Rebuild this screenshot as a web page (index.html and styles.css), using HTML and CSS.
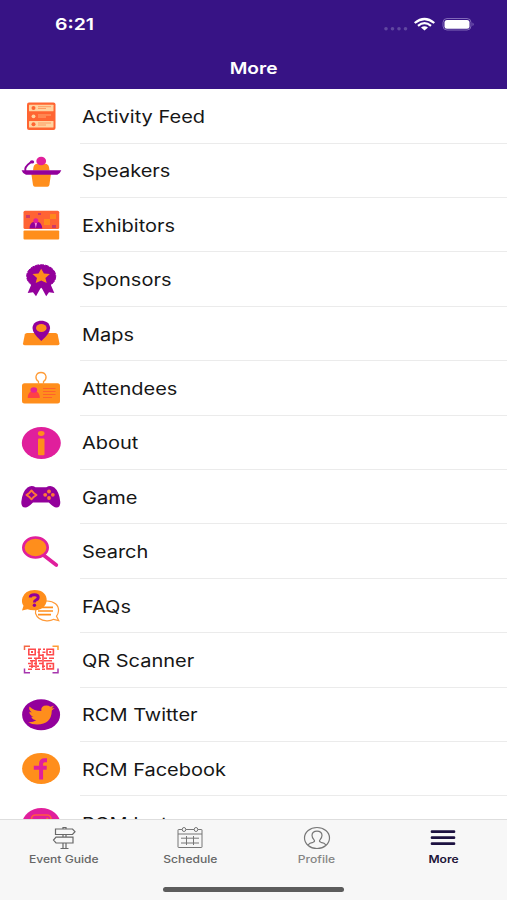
FILE: index.html
```html
<!DOCTYPE html>
<html lang="en">
<head>
<meta charset="utf-8">
<title>More</title>
<link rel="stylesheet" href="styles.css">
</head>
<body>
<div class="screen">
  <header class="header">
    <div class="status">
      <span class="time">6:21</span>
      <svg class="indicators" width="92" height="16" viewBox="0 0 92 16">
        <g fill="#6047a0"><circle cx="3" cy="12.800" r="1.800"/><circle cx="9.500" cy="12.800" r="1.800"/><circle cx="16" cy="12.800" r="1.800"/><circle cx="22.500" cy="12.800" r="1.800"/></g>
        <g fill="none" stroke="#fff" stroke-width="2.200"><path d="M31.700 7Q41.500-1 51.300 7"/><path d="M35 9.900Q41.500 4.500 48 9.900"/></g>
        <path d="M38 11.600Q41.500 9 45 11.600L41.500 14.500Z" fill="#fff"/>
        <rect x="60" y="2.500" width="28" height="11.500" rx="4" fill="none" stroke="#8068b8"/>
        <rect x="61.500" y="4" width="25" height="8.700" rx="2.500" fill="#fff"/>
        <path d="M89.500 6.500q2.500 1.800 0 3.600z" fill="#8068b8"/>
      </svg>
    </div>
    <h1 class="title"><span>More</span></h1>
  </header>
  <main class="list">
    <div class="row">
      <svg class="icon" viewBox="0 0 44 44"><rect x="8" y="8.500" width="28.500" height="27.500" rx="2" fill="#ff6532"/><g fill="#ffd3a0"><rect x="10" y="10.700" width="24.500" height="6.600" rx=".5"/><rect x="10" y="27" width="24.500" height="6.600" rx=".5"/></g><g fill="#ff6532"><circle cx="14.500" cy="14" r="2"/><circle cx="14.500" cy="30.300" r="2"/></g><circle cx="14.500" cy="22.300" r="1.900" fill="#ffd3a0"/><g stroke-width="1" fill="none"><path d="M19 14.500h8M19 12.700h13M19 31h8M19 29h13" stroke="#ff9c62"/><path d="M19 23h8M19 21h13" stroke="#ffaa70"/></g></svg>
      <span class="label">Activity Feed</span>
    </div>
    <div class="row">
      <svg class="icon" viewBox="0 0 44 44"><path d="M12.300 24.500h19.700l-1.600 11.500q-.3 1.800-2 1.800H16q-1.700 0-2-1.800ZM14 21.500q0-7 5-7h6.500q5 0 5 7Z" fill="#ff8e1c"/><ellipse cx="22.200" cy="12" rx="4.900" ry="4.300" fill="#e01f9c"/><path d="M2.600 21.300h39.700q-1 3-4 4.500H7Q3.500 24.500 2.600 21.300Z" fill="#93009b"/><path d="M6.500 22q-1.500-4 5-8.500" fill="none" stroke="#93009b" stroke-width="1.900"/><ellipse cx="13" cy="12.900" rx="2.200" ry="1.700" fill="#93009b"/></svg>
      <span class="label">Speakers</span>
    </div>
    <div class="row">
      <svg class="icon" viewBox="0 0 44 44"><rect x="4.500" y="7.700" width="35.700" height="18.300" rx="1.500" fill="#ff6334"/><rect x="4.500" y="27.600" width="35.700" height="8.800" rx="1" fill="#ff8e1c"/><path d="M31 11h6v5h-6zM25 16h6v6h-6z" fill="#ff881d"/><path d="M7 12h4v3H7zM19 10h3v2h-3zM33 22h4v3h-4z" fill="#cf3a66"/><path d="M10.500 25.500q.3-6 4.200-6.500h4.600q3.500 1 4 6.500Z" fill="#93009b"/><circle cx="16.800" cy="17.700" r="2.500" fill="#e01f9c"/><path d="m15.700 20 1.100 5.300L18 20z" fill="#fa8adb"/></svg>
      <span class="label">Exhibitors</span>
    </div>
    <div class="row">
      <svg class="icon" viewBox="0 0 44 44"><path d="M13 25 8.700 35l5.300-.8 3 4L22.200 29l5 9.200 2.800-4 5.300.8L31 25Z" fill="#93009b"/><ellipse cx="22.200" cy="18.200" rx="14.500" ry="11.500" fill="#93009b" stroke="#93009b" stroke-width="1" stroke-dasharray="4 1"/><path d="m22.200 10.800 2.700 4.800 6 .5-4.500 3.800 1.300 5.200-5.500-2.600-5.500 2.600 1.300-5.200-4.500-3.800 6-.5z" fill="#ff8e1c"/></svg>
      <span class="label">Sponsors</span>
    </div>
    <div class="row">
      <svg class="icon" viewBox="0 0 44 44"><path d="M8 21h28.500q1.800 0 2.200 1.500l1.800 9q.2 1.700-1.800 1.700H5.700q-2 0-1.700-1.700l1.800-9Q6.200 21 8 21Z" fill="#ff8e1c"/><path d="M22.300 29Q13.500 21.500 13.500 16c0-9.800 17.600-9.800 17.600 0q0 5.500-8.800 13Z" fill="#93009b"/><ellipse cx="22.300" cy="16" rx="5.300" ry="4" fill="#ff8e1c"/></svg>
      <span class="label">Maps</span>
    </div>
    <div class="row">
      <svg class="icon" viewBox="0 0 44 44"><rect x="3" y="17.300" width="38" height="20.300" rx="2.500" fill="#ff8e1c"/><path d="M19.500 18.500v-3q-3-2-2.500-5.200Q18 6.500 22 6.500t5 3.800q.5 3.200-2.500 5.200v3" fill="none" stroke="#ff9c38" stroke-width="1.300"/><path d="M8.700 32q0-5 3.300-6.500h5.600Q20.800 27 20.800 32Z" fill="#ff4144"/><ellipse cx="14.800" cy="24" rx="3.400" ry="2.700" fill="#e52392"/><path d="M24 22.500h12.500M24 25.500h12.500M24 28.500h12.500M24 31.500h9" stroke="#ff622b" stroke-width="1"/></svg>
      <span class="label">Attendees</span>
    </div>
    <div class="row">
      <svg class="icon" viewBox="0 0 44 44"><ellipse cx="22.300" cy="22" rx="19.500" ry="16" fill="#e01f9c"/><ellipse cx="22.200" cy="12.500" rx="3.300" ry="2.400" fill="#ff8e1c"/><rect x="19" y="17.500" width="6.500" height="16.700" rx="1" fill="#ff8e1c"/></svg>
      <span class="label">About</span>
    </div>
    <div class="row">
      <svg class="icon" viewBox="0 0 44 44"><path d="M8.500 12.500q4-3 8-.2h10.800q4-2.800 8 .2 5 4 6 14.500.2 5.500-4 5.500-2.500 0-7.500-5H14q-5 5-7.500 5-4.500 0-4.200-5.500 1-10.500 6.200-14.500Z" fill="#93009b"/><path d="m12.500 15.500 2.200 2.400 2.800 2-2.800 2-2.200 2.400-2.200-2.400-2.800-2 2.800-2z" fill="none" stroke="#ff7737" stroke-width="1.900" stroke-linejoin="round"/><g fill="#ff7737"><circle cx="30" cy="16.500" r="1.900"/><circle cx="30" cy="23" r="1.900"/><circle cx="26.200" cy="19.800" r="1.900"/><circle cx="33.800" cy="19.800" r="1.900"/></g></svg>
      <span class="label">Game</span>
    </div>
    <div class="row">
      <svg class="icon" viewBox="0 0 44 44"><path d="m25 25.500 12.300 9.500" stroke="#e01f9c" stroke-width="3.700" stroke-linecap="round"/><ellipse cx="16.500" cy="17.500" rx="12.200" ry="10" fill="#ff8e1c" stroke="#e01f9c" stroke-width="2.600"/></svg>
      <span class="label">Search</span>
    </div>
    <div class="row">
      <svg class="icon" viewBox="0 0 44 44"><path d="M28 17c7 0 12 4 11.500 10q-.3 3-2 5.200l2.200 4.300-5-1.200q-3 1.700-7 1.500-9-.5-11.200-7.500Q16.500 17 28 17Z" fill="#fff" stroke="#ff9a38" stroke-width="1.200"/><path d="M21 23.300h13M19 27h15M19 30.700h13" stroke="#ff8e1c" stroke-width="1.700"/><path d="M15.500 6C24 6 28 11 27.700 16.500 27 23 21.500 26.300 15 26.300q-4 0-6.500-1L3 26.500l1.500-4.700Q2 18.500 3.500 13.500 6 6.200 15.500 6Z" fill="#ff8e1c"/><path d="M11.200 13.500q.2-2.700 4.200-2.700 3.800 0 3.800 2.400 0 1.800-2.200 2.800-1.600.7-1.600 2.500" fill="none" stroke="#93009b" stroke-width="3"/><circle cx="15.400" cy="21.300" r="1.700" fill="#93009b"/></svg>
      <span class="label">FAQs</span>
    </div>
    <div class="row">
      <svg class="icon" viewBox="0 0 44 44"><path d="M5.500 12V8.200H11" fill="none" stroke="#f36845" stroke-width="1.500"/><path d="M33.500 8.200H39V12" fill="none" stroke="#ff9a32" stroke-width="1.500"/><path d="M5.500 30.500v4.300H11M33.500 34.800H39v-4.300" fill="none" stroke="#a636ae" stroke-width="1.500"/><g fill="none" stroke="#ff4a4c" stroke-width="1.600"><path d="M9.800 11.300h6.400v5.400H9.800zM28 11.300h6.400v5.400H28zM28 25.500h6.400v5.400H28z"/><path d="M19 11.200h3m2 0h2M18.500 14.200h2m3 0h3M20 17.200h4M9 20.200h4m2 0h7m3 0h3m2 0h5M11 22.800h5m3 0h4m2 0h8M9 25.500h3m3 0h3m2 0h4M10 28.300h6m2 0h2m3 0h3M9 31.200h4m3 0h5m2 0h3"/><path d="M20 12v8M24 16v14M17 20v10M13 22v8"/></g><path d="M12 13h2v2h-2zM30.200 13h2v2h-2zM30.200 27.200h2v2h-2z" fill="#ff4a4c"/></svg>
      <span class="label">QR Scanner</span>
    </div>
    <div class="row">
      <svg class="icon" viewBox="0 0 44 44"><ellipse cx="22.100" cy="21.700" rx="19" ry="15.500" fill="#93009b"/><path d="M10.500 13.500Q15 18 22.300 18q-.7-5.500 5.200-5.500 2.300 0 3.800 1.300l3.600-1-2.300 2.600 3-.5-2.800 2.700Q32.500 31.500 18 31.500q-5.200 0-8.800-2.200 5 .2 8-2-3.800-.5-5-3.500h2.300q-4-1.500-4.200-5l2.500.6q-3.700-2.700-2.300-5.900Z" fill="#ff8e1c"/></svg>
      <span class="label">RCM Twitter</span>
    </div>
    <div class="row">
      <svg class="icon" viewBox="0 0 44 44"><ellipse cx="22.100" cy="21.400" rx="19" ry="15.500" fill="#ff8e1c"/><path d="M28 13.200h-2.200q-3.700 0-3.700 3.500v15.800M14.800 20.700h12.900" fill="none" stroke="#e01f9c" stroke-width="4"/></svg>
      <span class="label">RCM Facebook</span>
    </div>
    <div class="row">
      <svg class="icon" viewBox="0 0 44 44"><ellipse cx="22.300" cy="21.600" rx="19" ry="15.500" fill="#e01f9c"/><rect x="12.500" y="13" width="19.500" height="17" rx="4" fill="none" stroke="#ff5b42" stroke-width="1.700"/><ellipse cx="22.200" cy="21.500" rx="4.500" ry="4" fill="none" stroke="#ff5b42" stroke-width="1.700"/><circle cx="28.300" cy="16.500" r="1.100" fill="#ff5b42"/></svg>
      <span class="label">RCM Instagram</span>
    </div>
  </main>
  <nav class="tabs">
    <div class="tab">
      <svg viewBox="0 0 30 26"><g fill="none" stroke="#686868" stroke-width="1.200"><path d="M14 4V2.500h3V4M14 9.500v2.700m3-2.700v2.700M14 18v5m3-5v5M11.500 23.500h8M6.500 4h17l2.500 2.700-2.500 2.800h-17zM24 12.200H7l-2.500 2.900L7 18h17z"/></g></svg>
      <span>Event Guide</span>
    </div>
    <div class="tab">
      <svg viewBox="0 0 30 26"><g fill="none" stroke="#777" stroke-width="1"><rect x="3" y="4.500" width="24" height="18" rx=".5"/><path d="M3 9h24M6 13.200h18M6 18h18M11.500 11v9M18.500 11v9"/><ellipse cx="9" cy="4.500" rx="1.800" ry="2" fill="#f7f7f7"/><ellipse cx="21" cy="4.500" rx="1.800" ry="2" fill="#f7f7f7"/></g></svg>
      <span>Schedule</span>
    </div>
    <div class="tab profile">
      <svg viewBox="0 0 30 26"><g fill="none" stroke="#777" stroke-width="1.200"><ellipse cx="15" cy="13" rx="12.500" ry="10.500"/><path d="M6 20q1.500-2.200 5-2.700 2.500-.8 1-2.500-2-2-2-4.500Q10.300 6.200 15 6.200t5 4.100q0 2.500-2 4.500-1.500 1.700 1 2.500 3.500.5 5 2.700"/></g></svg>
      <span>Profile</span>
    </div>
    <div class="tab active">
      <svg viewBox="0 0 30 26"><path d="M4 6.700h22M4 12.700h22M4 18.700h22" stroke="#1c1140" stroke-width="2.700" stroke-linecap="round"/></svg>
      <span>More</span>
    </div>
    <div class="home"></div>
  </nav>
</div>
</body>
</html>
```
FILE: styles.css
```css
* { box-sizing: border-box; }
body { margin: 0; background: #fff; font-family: Inter, "Liberation Sans", sans-serif; }
.screen { width: 507px; height: 900px; overflow: hidden; display: flex; flex-direction: column; }
.header { height: 89.300px; flex: none; background: #371385; color: #fff; }
.status { height: 48px; display: flex; justify-content: space-between; align-items: center; padding: 0 32px 0 55px; }
.time { font-size: 16.500px; font-weight: 600; transform: scaleX(1.18); transform-origin: left; }
.title { margin: 0; height: 40px; line-height: 41px; text-align: center; font-size: 16.500px; font-weight: 600; }
.title span { display: inline-block; transform: scaleX(1.160); }
.list { flex: 1; min-height: 0; overflow: hidden; }
.row { height: 54.400px; display: flex; align-items: center; padding-left: 18.500px; background: linear-gradient(#ebebeb, #ebebeb) 80px 100% / 100% 1px no-repeat; }
.icon { width: 44px; height: 44px; flex: none; }
.label { margin-left: 19.500px; font-size: 17.300px; color: #161616; white-space: nowrap; transform: scaleX(1.157); transform-origin: left; }
.tabs { height: 81px; flex: none; background: #f7f7f7; border-top: 1px solid #dedede; display: grid; grid-template-columns: repeat(4, 126.500px); grid-template-rows: 67px 5px; padding-left: .5px; }
.tab { display: flex; flex-direction: column; align-items: center; padding-top: 5px; color: #666; font-size: 10px; font-weight: 500; }
.tab svg { width: 30px; height: 26px; }
.tab span { line-height: 17px; transform: scaleX(1.210); white-space: nowrap; }
.tab.profile { color: #858585; }
.tab.active { color: #1c1438; font-weight: 600; }
.home { grid-column: 1 / -1; justify-self: center; width: 181px; height: 5px; border-radius: 3px; background: #5c5c5c; }
```
